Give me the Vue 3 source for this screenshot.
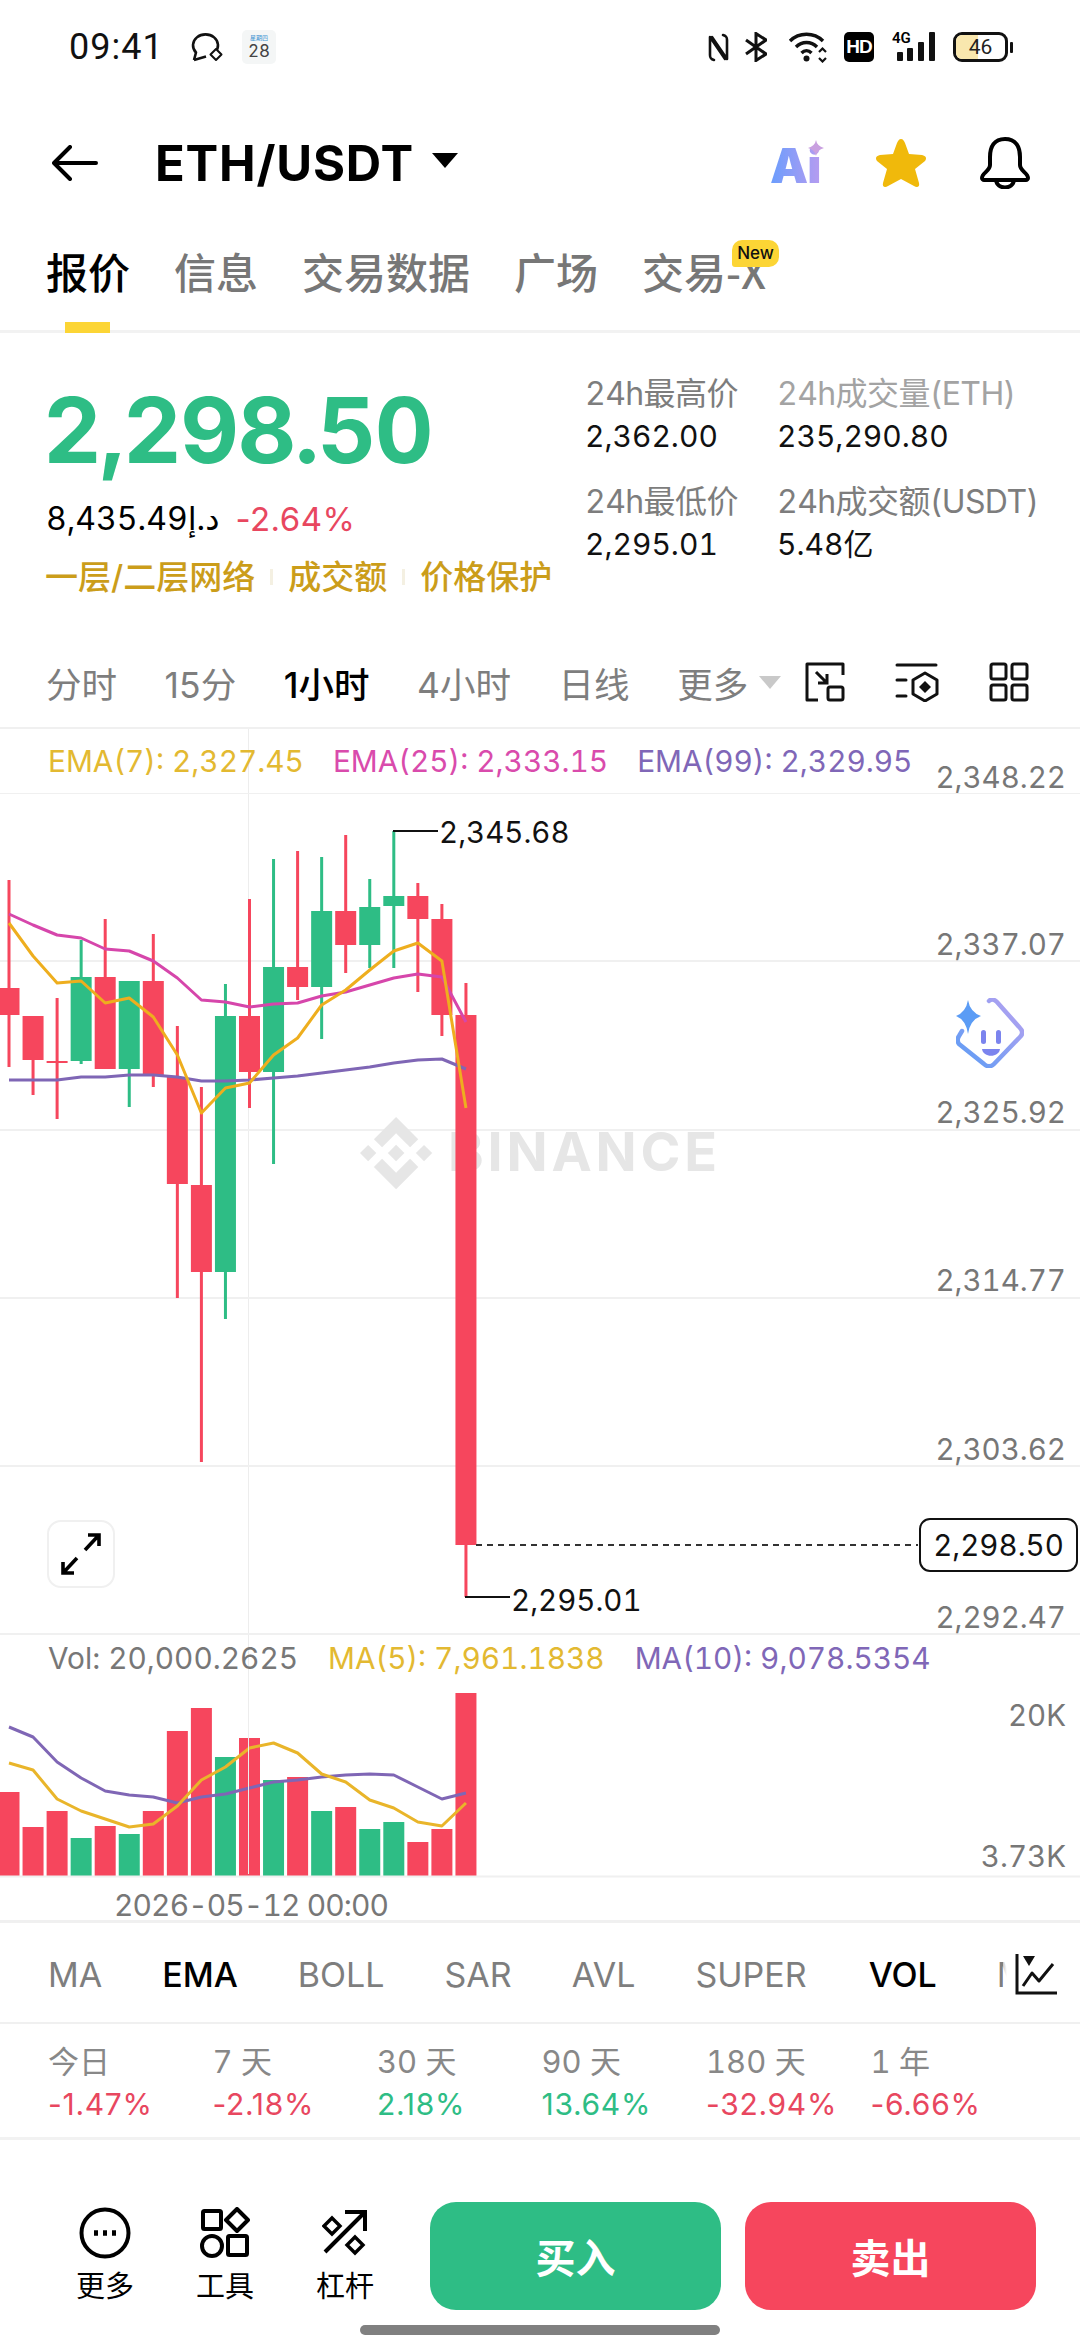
<template>
  <div class="page">
    <!-- status bar -->
    <div class="status">
      <div class="status-left">
        <span class="clock">09:41</span>
        <svg class="st-chat" viewBox="0 0 34 30" width="34" height="30" fill="none" stroke="#111" stroke-width="2.6" stroke-linejoin="round">
          <path d="M4 28 L6 20.5 A12.5 11 0 1 1 25 20.5" />
          <path d="M4 28 L16 24.5" />
          <path d="M26 17 l5.5 5.5 -5.5 5.5 -5.5 -5.5z" fill="#fff" stroke-width="2" />
        </svg>
        <div class="cal">
          <span class="cal-top">星期四</span>
          <span class="cal-num">28</span>
        </div>
      </div>
      <div class="status-right">
        <svg viewBox="0 0 21 29" width="21" height="29" fill="none" stroke="#111" stroke-width="2.6" stroke-linejoin="round" stroke-linecap="round">
          <path d="M6 27 C2 26 2 24 2 22 V4 L17 26" />
          <path d="M15 2 C19 3 19 5 19 7 V26 L4 4" />
        </svg>
        <svg class="st-bt" viewBox="0 0 22 30" width="22" height="30" fill="none" stroke="#111" stroke-width="3" stroke-linejoin="miter">
          <path d="M1 8 L21 22 L11 28.5 V1.5 L21 8 L1 22" />
        </svg>
        <svg class="st-wifi" viewBox="0 0 40 32" width="40" height="32" fill="none" stroke="#111" stroke-width="3.4">
          <path d="M2 10 C11 1 26 1 35 10" />
          <path d="M8 16 C14 10 23 10 29 16" />
          <path d="M13.5 22 C16.5 19 20.5 19 23.5 22" />
          <circle cx="18.5" cy="27.5" r="3" fill="#111" stroke="none" />
          <path d="M31 21 l3.5 -3.5 3.5 3.5 M31 27 l3.5 3.5 3.5 -3.5" stroke-width="2.2" />
        </svg>
        <span class="hd">HD</span>
        <div class="net">
          <span class="net-g">4G</span>
          <svg viewBox="0 0 43 30" width="43" height="30" fill="#111">
            <rect x="5" y="20" width="6" height="9" rx="1" />
            <rect x="15" y="16" width="6" height="13" rx="1" />
            <rect x="26" y="10" width="6" height="19" rx="1" />
            <rect x="37" y="0" width="6" height="29" rx="1" />
          </svg>
        </div>
        <div class="battery">
          <div class="batt-body"><span class="batt-fill"></span><span class="batt-num">46</span></div>
          <span class="batt-cap"></span>
        </div>
      </div>
    </div>

    <!-- header -->
    <header class="head">
      <svg class="back" viewBox="0 0 46 36" width="46" height="36" fill="none" stroke="#000" stroke-width="4" stroke-linecap="round" stroke-linejoin="round">
        <path d="M44 18 H3 M18 2 L2 18 L18 34" />
      </svg>
      <h1 class="pair">ETH/USDT</h1>
      <span class="pair-caret"></span>
      <div class="head-icons">
        <div class="ai">
          <span class="ai-text">Ai</span>
          <svg class="ai-spark" viewBox="0 0 16 16" width="16" height="16"><path d="M8 0 Q9 6 16 8 Q9 10 8 16 Q7 10 0 8 Q7 6 8 0z" fill="#c9a0e0" /></svg>
        </div>
        <svg viewBox="0 0 52 50" width="52" height="50">
          <path d="M26 1 C28 1 29 3 30 5 L34 16 L47 17 C51 18 52 20 50 23 L40 31 L44 45 C45 49 42 50 39 48 L26 41 L13 48 C10 50 7 49 8 45 L12 31 L2 23 C0 20 1 18 5 17 L18 16 L22 5 C23 3 24 1 26 1z" fill="#f0b90b" />
        </svg>
        <svg viewBox="0 0 50 52" width="50" height="52" fill="none" stroke="#000" stroke-width="4" stroke-linejoin="round">
          <path d="M25 2 C14 2 10 10 10 20 V28 C10 34 2 36 2 41 C2 42 3 43 4 43 H46 C47 43 48 42 48 41 C48 36 40 34 40 28 V20 C40 10 36 2 25 2z" />
          <path d="M16 43 C17 53 33 53 34 43" />
        </svg>
      </div>
    </header>

    <!-- tabs -->
    <nav class="tabs">
      <div v-for="t in tabs" :key="t" class="tab" :class="{ active: t === '报价' }">
        {{ t }}
        <span v-if="t === '交易-X'" class="new">New</span>
      </div>
    </nav>

    <!-- price block -->
    <section class="quote">
      <div class="quote-left">
        <div class="last">2,298.50</div>
        <div class="fiat"><span class="fiat-num">8,435.49د.إ</span> <span class="down">-2.64%</span></div>
        <div class="links">
          <span>一层/二层网络</span><i></i><span>成交额</span><i></i><span>价格保护</span>
        </div>
      </div>
      <div class="stats">
        <div v-for="s in stats" :key="s.label" class="stat">
          <span class="stat-label" :class="{ light: s.light }">{{ s.label }}</span>
          <span class="stat-value">{{ s.value }}</span>
        </div>
      </div>
    </section>

    <!-- intervals -->
    <div class="intervals">
      <span v-for="i in intervals" :key="i" class="iv" :class="{ on: i === '1小时' }">{{ i }}</span>
      <span class="iv-caret"></span>
      <div class="iv-icons">
        <svg viewBox="0 0 40 40" width="40" height="40" fill="none" stroke="#111" stroke-width="3">
          <path d="M13 38 H2 V2 H38 V13" stroke-linejoin="round" />
          <path d="M11 10 L22 21 M22 12 V21 H13" />
          <rect x="23" y="25" width="15" height="13" rx="2" />
        </svg>
        <svg viewBox="0 0 44 40" width="44" height="40" fill="none" stroke="#111" stroke-width="3" stroke-linecap="round">
          <path d="M2 3 H41 M2 18 H11 M2 34 H11" />
          <path d="M30 11 L42 18 V32 L30 39 L18 32 V18z" stroke-linejoin="round" />
          <path d="M30 19 l6 6 -6 6 -6 -6z" fill="#111" stroke="none" />
        </svg>
        <svg viewBox="0 0 40 40" width="40" height="40" fill="none" stroke="#111" stroke-width="3">
          <rect x="2" y="2" width="15" height="15" rx="2" />
          <rect x="23" y="2" width="15" height="15" rx="2" />
          <rect x="2" y="23" width="15" height="15" rx="2" />
          <rect x="23" y="23" width="15" height="15" rx="2" />
        </svg>
      </div>
    </div>

    <!-- chart -->
    <section class="chart">
      <span class="vline"></span>
      <div class="legend">
        <span class="c-yellow">EMA(7): 2,327.45</span>
        <span class="c-pink">EMA(25): 2,333.15</span>
        <span class="c-purple">EMA(99): 2,329.95</span>
        <span class="axis-top">2,348.22</span>
      </div>

      <div class="plot">
        <svg viewBox="0 793 1080 842" width="1080" height="842">
          <line v-for="g in grid" :key="g" x1="0" x2="1080" :y1="g" :y2="g" class="gridline" />
          <path transform="translate(360 1117) scale(0.57)" fill="#e6e6e6" d="M38.73 53.2L63.3 28.63l24.59 24.6 14.3-14.3L63.3 0 24.43 38.9zM0 63.3l14.3-14.3 14.3 14.3-14.3 14.3zM38.73 73.41L63.3 97.98l24.59-24.59 14.31 14.29-38.9 38.91-38.9-38.88-.02-.02zM98.02 63.31l14.3-14.3 14.3 14.3-14.3 14.3zM77.83 63.3L63.3 48.76 52.55 59.51l-1.24 1.24-2.54 2.54 14.53 14.52 14.53-14.51z" />
          <text x="448" y="1171" class="wm" textLength="269">BINANCE</text>

          <g v-for="(c, i) in candles" :key="i" :fill="c[0] ? green : red">
            <rect :x="cx(i) - 1.5" :y="c[1]" width="3" :height="c[2] - c[1]" />
            <rect :x="cx(i) - 10.5" :y="c[3]" width="21" :height="c[4] - c[3]" />
          </g>

          <polyline :points="line(ema25)" class="ln" stroke="#d646ab" />
          <polyline :points="line(ema99)" class="ln" stroke="#7f66b5" />
          <polyline :points="line(ema7)" class="ln" stroke="#eeae1e" />

          <text v-for="a in axis" :key="a.t" x="1066" :y="a.y" class="ax">{{ a.t }}</text>

          <path d="M393 831 H438" stroke="#111" stroke-width="2" fill="none" />
          <text x="439" y="843" class="hl">2,345.68</text>
          <path d="M465 1597 H510" stroke="#111" stroke-width="2" fill="none" />
          <text x="511" y="1611" class="hl">2,295.01</text>
          <line x1="476" x2="918" y1="1545" y2="1545" stroke="#333" stroke-width="2" stroke-dasharray="6 5" />
        </svg>

        <div class="now">2,298.50</div>
        <button class="expand">
          <svg viewBox="0 0 44 44" width="44" height="44" fill="none" stroke="#000" stroke-width="3.6">
            <path d="M26 18 L40 3 M29 3 H40 V14" />
            <path d="M18 26 L4 41 M4 30 V41 H15" />
          </svg>
        </button>
        <svg class="bot" viewBox="0 0 68 70" width="68" height="70" fill="none">
          <defs>
            <linearGradient id="botg" x1="0" y1="1" x2="1" y2="0">
              <stop offset="0" stop-color="#5b9cf5" />
              <stop offset="1" stop-color="#b9a2f0" />
            </linearGradient>
          </defs>
          <path d="M6 33 L3 38 C1 41 1 43 3 46 L28 66 C31 69 35 69 38 66 L64 39 C67 36 67 33 64 30 L41 4 C38 1 35 1 33 3" stroke="url(#botg)" stroke-width="4.5" stroke-linecap="round" />
          <path d="M12 2 Q14 14 25 18 Q14 22 12 36 Q10 22 0 18 Q10 14 12 2z" fill="#5b9cf5" />
          <rect x="25" y="32" width="5" height="14" rx="2.5" fill="#7b84ee" />
          <rect x="40" y="32" width="5" height="14" rx="2.5" fill="#7b84ee" />
          <path d="M26 51 H44 C43 60 27 60 26 51z" fill="#7b84ee" />
        </svg>
      </div>

      <div class="legend vol-legend">
        <span class="c-grey">Vol: 20,000.2625</span>
        <span class="c-yellow">MA(5): 7,961.1838</span>
        <span class="c-purple">MA(10): 9,078.5354</span>
      </div>

      <div class="vol">
        <svg viewBox="0 1681 1080 197" width="1080" height="197">
          <rect v-for="(v, i) in vols" :key="i" :x="cx(i) - 10.5" :y="v" width="21" :height="1876 - v" :fill="candles[i][0] ? green : red" />
          <polyline :points="line(ma10)" class="ln" stroke="#7f66b5" />
          <polyline :points="line(ma5)" class="ln" stroke="#e9b52a" />
          <line x1="0" x2="1080" y1="1876.5" y2="1876.5" class="gridline" />
          <text x="1066" y="1726" class="ax">20K</text>
          <text x="1066" y="1867" class="ax">3.73K</text>
        </svg>
      </div>

      <div class="time-axis">2026-05-12 00:00</div>
    </section>

    <!-- indicators -->
    <div class="indicators">
      <template v-for="n in indicators" :key="n">
        <i v-if="n === '|'" class="ind-div"></i>
        <span v-else class="ind" :class="{ on: n === 'EMA' || n === 'VOL' }">{{ n }}</span>
      </template>
      <div class="ind-tool">
        <svg viewBox="0 0 42 42" width="42" height="42" fill="none" stroke="#111" stroke-width="3">
          <path d="M2 0 V39 H42" />
          <path d="M8 32 L17 19 L24 27 L38 10" stroke-linejoin="round" />
          <path d="M8 2 H20 L14 12z" fill="#111" stroke="none" />
        </svg>
      </div>
    </div>

    <!-- periods -->
    <div class="periods">
      <div v-for="p in periods" :key="p.k" class="period">
        <span class="p-k">{{ p.k }}</span>
        <span class="p-v" :class="p.v.startsWith('-') ? 'down' : 'up'">{{ p.v }}</span>
      </div>
    </div>

    <!-- bottom actions -->
    <footer class="actions">
      <div class="tools">
        <div class="tool">
          <svg viewBox="0 0 52 52" width="52" height="52" fill="none" stroke="#000" stroke-width="4">
            <circle cx="26" cy="26" r="23.5" />
            <path d="M15 26h4M24 26h4M33 26h4" stroke-width="5.5" />
          </svg>
          <span>更多</span>
        </div>
        <div class="tool">
          <svg viewBox="0 0 50 50" width="50" height="50" fill="none" stroke="#000" stroke-width="4" stroke-linejoin="round">
            <rect x="3" y="3" width="18" height="18" rx="1.5" />
            <path d="M37 1 L48 12 L37 23 L26 12z" />
            <circle cx="12" cy="38" r="10" />
            <rect x="28" y="28" width="19" height="19" rx="1.5" />
          </svg>
          <span>工具</span>
        </div>
        <div class="tool">
          <svg viewBox="0 0 46 50" width="46" height="50" fill="none" stroke="#000" stroke-width="4">
            <path d="M3 44 L42 5 M23 4 H43 V23" />
            <path d="M10 10 L18 18 L10 26 L2 18z" stroke-width="3.4" />
            <path d="M33 29 L41 37 L33 45 L25 37z" stroke-width="3.4" />
          </svg>
          <span>杠杆</span>
        </div>
      </div>
      <button class="trade buy">买入</button>
      <button class="trade sell">卖出</button>
    </footer>
    <div class="home"><span></span></div>
  </div>
</template>

<script setup>
const green = '#2ebd85'
const red = '#f6465d'

const tabs = ['报价', '信息', '交易数据', '广场', '交易-X']
const intervals = ['分时', '15分', '1小时', '4小时', '日线', '更多']
const indicators = ['MA', 'EMA', 'BOLL', 'SAR', 'AVL', 'SUPER', '|', 'VOL', 'MAVOL']

const stats = [
  { label: '24h最高价', value: '2,362.00' },
  { label: '24h成交量(ETH)', value: '235,290.80', light: true },
  { label: '24h最低价', value: '2,295.01' },
  { label: '24h成交额(USDT)', value: '5.48亿' }
]

const periods = [
  { k: '今日', v: '-1.47%' },
  { k: '7 天', v: '-2.18%' },
  { k: '30 天', v: '2.18%' },
  { k: '90 天', v: '13.64%' },
  { k: '180 天', v: '-32.94%' },
  { k: '1 年', v: '-6.66%' }
]

const grid = [793, 961, 1130, 1298, 1466, 1634]
const axis = [
  { t: '2,337.07', y: 955 },
  { t: '2,325.92', y: 1123 },
  { t: '2,314.77', y: 1291 },
  { t: '2,303.62', y: 1460 },
  { t: '2,292.47', y: 1628 }
]

// [isUp, wickTop, wickBottom, bodyTop, bodyBottom], page pixels
const candles = [
  [0, 880, 1067, 988, 1015],
  [0, 1016, 1095, 1016, 1060],
  [0, 998, 1119, 1061, 1063],
  [1, 940, 1064, 977, 1061],
  [0, 919, 1069, 977, 1069],
  [1, 981, 1107, 981, 1069],
  [0, 934, 1087, 981, 1075],
  [0, 1026, 1298, 1077, 1184],
  [0, 1087, 1462, 1185, 1272],
  [1, 984, 1319, 1016, 1272],
  [0, 899, 1108, 1016, 1072],
  [1, 859, 1164, 967, 1072],
  [0, 851, 1000, 967, 987],
  [1, 857, 1039, 911, 987],
  [0, 835, 973, 911, 945],
  [1, 879, 968, 907, 945],
  [1, 831, 968, 896, 906],
  [0, 883, 992, 896, 919],
  [0, 904, 1036, 919, 1015],
  [0, 983, 1597, 1015, 1545]
]

const ema7 = [923, 956, 983, 981, 1003, 998, 1017, 1055, 1113, 1088, 1083, 1055, 1038, 1005, 990, 970, 951, 943, 961, 1108]
const ema25 = [914, 925, 935, 938, 949, 951, 961, 978, 1000, 1002, 1007, 1004, 1003, 996, 992, 985, 978, 974, 977, 1022]
const ema99 = [1080, 1080, 1080, 1077, 1077, 1075, 1075, 1077, 1081, 1081, 1080, 1078, 1076, 1073, 1070, 1067, 1063, 1060, 1059, 1069]

const vols = [1792, 1827, 1811, 1838, 1826, 1834, 1811, 1731, 1708, 1757, 1738, 1780, 1777, 1811, 1807, 1829, 1822, 1842, 1829, 1693]
const ma5 = [1763, 1770, 1799, 1811, 1819, 1827, 1824, 1806, 1780, 1767, 1748, 1743, 1753, 1774, 1782, 1800, 1808, 1822, 1826, 1803]
const ma10 = [1727, 1737, 1762, 1778, 1791, 1795, 1797, 1803, 1797, 1794, 1788, 1782, 1780, 1777, 1775, 1774, 1775, 1787, 1799, 1793]

const cx = (i) => 9 + i * 24.05
const line = (ys) => ys.map((y, i) => `${cx(i)},${y}`).join(' ')
</script>

<style>
html,
body {
  margin: 0;
  background: #fff;
}
</style>

<style scoped>
* {
  box-sizing: border-box;
}

.page {
  width: 1080px;
  height: 2340px;
  overflow: hidden;
  background: #fff;
  color: #000;
  font-family: Inter, "Noto Sans CJK SC", sans-serif;
  font-variant-numeric: tabular-nums;
}

/* status bar */
.status {
  height: 96px;
  padding: 30px 67px 0 69px;
  display: flex;
  justify-content: space-between;
  align-items: flex-start;
}

.status-left,
.status-right {
  display: flex;
  align-items: center;
  height: 34px;
}

.clock {
  font-family: Roboto, sans-serif;
  font-size: 36px;
  letter-spacing: 1px;
  color: #111;
  width: 121px;
}

.st-chat {
  margin-right: 18px;
}

.cal {
  width: 34px;
  height: 34px;
  background: #f4f6f6;
  border-radius: 5px;
  display: flex;
  flex-direction: column;
  align-items: center;
  line-height: 1;
}

.cal-top {
  font-size: 6px;
  color: #3d93d1;
  margin-top: 5px;
}

.cal-num {
  font-size: 17px;
  color: #444;
  margin-top: 2px;
}

.status-right {
  gap: 18px;
}

.st-bt {
  margin: 0 3px 0 -2px;
}

.st-wifi {
  margin-right: -2px;
}

.hd {
  width: 30px;
  height: 30px;
  background: #000;
  color: #fff;
  border-radius: 5px;
  font: 700 19px/30px "Liberation Sans Narrow", "Liberation Sans", sans-serif;
  letter-spacing: -1px;
  text-align: center;
}

.net {
  position: relative;
  width: 43px;
  height: 30px;
}

.net-g {
  position: absolute;
  left: 0;
  top: -2px;
  font: 600 15px/16px Roboto, sans-serif;
}

.battery {
  display: flex;
  align-items: center;
  gap: 2px;
}

.batt-body {
  position: relative;
  width: 55px;
  height: 30px;
  border: 3px solid #111;
  border-radius: 9px;
  overflow: hidden;
}

.batt-fill {
  position: absolute;
  left: 0;
  top: 0;
  bottom: 0;
  width: 22px;
  background: #f9e7ae;
}

.batt-num {
  position: absolute;
  inset: 0;
  text-align: center;
  font: 400 21px/24px Roboto, sans-serif;
  color: #222;
}

.batt-cap {
  width: 3px;
  height: 11px;
  background: #111;
  border-radius: 1px;
}

/* header */
.head {
  height: 134px;
  padding: 0 50px 0 52px;
  display: flex;
  align-items: center;
}

.pair {
  margin: 0 0 0 57px;
  font-size: 49px;
  font-weight: 700;
  letter-spacing: 0.8px;
}

.pair-caret {
  margin: -6px 0 0 18px;
  border-left: 13px solid transparent;
  border-right: 13px solid transparent;
  border-top: 15px solid #000;
}

.head-icons {
  margin-left: auto;
  display: flex;
  align-items: center;
  gap: 53px;
}

.ai {
  position: relative;
  width: 54px;
  height: 50px;
  margin-right: -2px;
}

.ai-text {
  position: absolute;
  left: 0;
  bottom: -7px;
  font-size: 48px;
  line-height: 1.2;
  font-weight: 900;
  letter-spacing: -1px;
  background: linear-gradient(90deg, #6a9dfd, #b59cf0);
  -webkit-background-clip: text;
  background-clip: text;
  color: transparent;
}

.ai-spark {
  position: absolute;
  right: 0;
  top: 2px;
}

/* tabs */
.tabs {
  height: 103px;
  padding: 0 0 0 46px;
  display: flex;
  gap: 44px;
  border-bottom: 3px solid #f2f2f2;
  font-family: "Noto Sans CJK SC", sans-serif;
  font-size: 42px;
}

.tab {
  position: relative;
  padding-top: 11px;
  line-height: 60px;
  color: #777;
  font-weight: 500;
}

.tab.active {
  color: #000;
  font-weight: 500;
}

.tab.active::after {
  content: "";
  position: absolute;
  left: 19px;
  bottom: -3px;
  width: 45px;
  height: 11px;
  background: #fcd535;
}

.new {
  position: absolute;
  left: 90px;
  top: 10px;
  width: 47px;
  height: 27px;
  border-radius: 10px 10px 10px 3px;
  background: #fcd535;
  color: #111;
  font-family: Inter, sans-serif;
  font-size: 17px;
  font-weight: 500;
  line-height: 27px;
  text-align: center;
}

/* quote */
.quote {
  height: 304px;
  padding-left: 46px;
  display: flex;
}

.quote-left {
  width: 539px;
  padding-top: 47px;
}

.last {
  margin-left: -3px;
  font-size: 91px;
  font-weight: 700;
  line-height: 100px;
  letter-spacing: -1.6px;
  color: #2ebd85;
}

.fiat {
  margin-top: 19px;
  font-size: 32px;
  line-height: 40px;
  font-family: Inter, "DejaVu Sans", sans-serif;
  display: flex;
  align-items: center;
  gap: 16px;
}

.fiat-num {
  letter-spacing: 0.7px;
}

.fiat .down {
  font-size: 33px;
  letter-spacing: 0.5px;
  font-variant-numeric: normal;
}

.down {
  color: #e8475f;
}

.up {
  color: #2ebd85;
}

.links {
  margin: 16px 0 0 -1px;
  display: flex;
  align-items: center;
  font-size: 33px;
  line-height: 44px;
  color: #cb9d1a;
  font-weight: 500;
}

.links i {
  width: 3px;
  height: 16px;
  margin: 0 15px;
  background: #f4f0e2;
}

.stats {
  display: grid;
  grid-template-columns: 192px auto;
  grid-auto-rows: 108px;
  padding-top: 39px;
}

.stat {
  display: flex;
  flex-direction: column;
  gap: 0;
  line-height: 44px;
  white-space: nowrap;
}

.stat-label {
  color: #7d7d7d;
  font-size: 32px;
  letter-spacing: -0.6px;
}

.stat-label.light {
  color: #a3a3a3;
}

.stat-value {
  color: #111;
  line-height: 40px;
  font-size: 30px;
}

/* intervals */
.intervals {
  height: 90px;
  padding: 0 0 0 46px;
  display: flex;
  align-items: center;
  gap: 47.6px;
  font-size: 35.5px;
  font-variant-numeric: normal;
  color: #7e7e7e;
}

.iv.on {
  color: #000;
  font-weight: 500;
}

.iv-caret {
  margin-left: -37px;
  border-left: 11px solid transparent;
  border-right: 11px solid transparent;
  border-top: 13px solid #c9c9c9;
}

.iv-icons {
  margin-left: -23px;
  display: flex;
  align-items: center;
  gap: 50px;
}

/* chart */
.chart {
  position: relative;
  height: 1196px;
  border-top: 2px solid #f0f0f0;
  border-bottom: 3px solid #f0f0f0;
}

.vline {
  position: absolute;
  left: 248px;
  top: 0;
  bottom: 46px;
  width: 1px;
  background: #ededed;
}

.legend {
  position: relative;
  height: 64px;
  padding-left: 48px;
  display: flex;
  gap: 29px;
  align-items: center;
  font-size: 29.8px;
  white-space: nowrap;
}

.axis-top {
  position: absolute;
  right: 14px;
  top: 30px;
  line-height: 36px;
  font-size: 29.5px;
  color: #777;
}

.c-yellow { color: #e3b931; }
.c-pink { color: #d94bac; }
.c-purple { color: #8067b7; }
.c-grey { color: #777; }

.plot {
  position: relative;
  height: 842px;
}

.plot svg,
.vol svg {
  display: block;
}

.gridline {
  stroke: #f0f0f0;
  stroke-width: 2;
}

.wm {
  font: 700 54px Inter, sans-serif;
  fill: #e6e6e6;
}

.ln {
  fill: none;
  stroke-width: 3;
  stroke-linejoin: round;
}

.ax {
  font: 400 29.5px Inter, sans-serif;
  font-variant-numeric: tabular-nums;
  fill: #777;
  text-anchor: end;
}

.hl {
  font: 400 29.5px Inter, sans-serif;
  font-variant-numeric: tabular-nums;
  fill: #111;
}

.now {
  position: absolute;
  left: 919px;
  top: 725px;
  width: 159px;
  height: 54px;
  border: 2px solid #111;
  border-radius: 11px;
  background: #fff;
  font-size: 29.5px;
  line-height: 50px;
  text-align: center;
  color: #111;
}

.expand {
  position: absolute;
  left: 47px;
  top: 727px;
  width: 68px;
  height: 68px;
  padding: 0;
  background: #fff;
  border: 2px solid #f0f0f0;
  border-radius: 14px;
  display: flex;
  align-items: center;
  justify-content: center;
}

.bot {
  position: absolute;
  left: 956px;
  top: 205px;
}

.vol-legend {
  height: 46px;
  gap: 30px;
  font-size: 29.8px;
}

.vol {
  height: 197px;
}

.time-axis {
  height: 44px;
  padding-left: 114px;
  font-size: 30px;
  letter-spacing: -0.9px;
  line-height: 54px;
  color: #777;
}

/* indicators */
.indicators {
  position: relative;
  height: 101px;
  padding: 4px 0 0 48px;
  display: flex;
  align-items: center;
  gap: 60px;
  border-bottom: 2px solid #f0f0f0;
  font-size: 34px;
  color: #7e7e7e;
  overflow: hidden;
  white-space: nowrap;
}

.ind.on {
  color: #000;
  font-weight: 500;
}

.ind-div {
  width: 2px;
  height: 36px;
  margin: 0 -29px;
  background: #f0f0f0;
}

.ind-tool {
  position: absolute;
  right: 0;
  top: 0;
  bottom: 0;
  width: 77px;
  padding: 31px 0 0 12px;
  background: linear-gradient(90deg, rgba(255, 255, 255, 0.6), #fff 4px);
}

/* periods */
.periods {
  height: 116px;
  padding: 17px 0 0 48px;
  display: grid;
  grid-template-columns: repeat(6, 164.5px);
  border-bottom: 3px solid #f2f2f2;
}

.period {
  display: flex;
  flex-direction: column;
  font-size: 30px;
  line-height: 42px;
  white-space: nowrap;
}

.p-v {
  font-variant-numeric: normal;
  letter-spacing: 0.7px;
}

.p-k {
  color: #888;
  font-size: 31px;
}

/* actions */
.actions {
  height: 185px;
  padding-top: 62px;
  display: flex;
  align-items: flex-start;
}

.tools {
  width: 430px;
  padding-left: 45px;
  display: flex;
}

.tool {
  width: 120px;
  height: 108px;
  padding-top: 5px;
  display: flex;
  flex-direction: column;
  align-items: center;
  justify-content: flex-start;
  font-size: 29px;
  line-height: 36px;
}

.tool svg {
  height: 52px;
  margin-bottom: 10px;
  flex: none;
}

.trade {
  width: 291px;
  height: 108px;
  border: 0;
  border-radius: 26px;
  color: #fff;
  font-family: inherit;
  font-size: 40px;
  font-weight: 700;
}

.buy {
  background: #2ebd85;
}

.sell {
  margin-left: 24px;
  background: #f6465d;
}

.home {
  display: flex;
  justify-content: center;
}

.home span {
  width: 360px;
  height: 10px;
  border-radius: 5px;
  background: #808080;
}
</style>
